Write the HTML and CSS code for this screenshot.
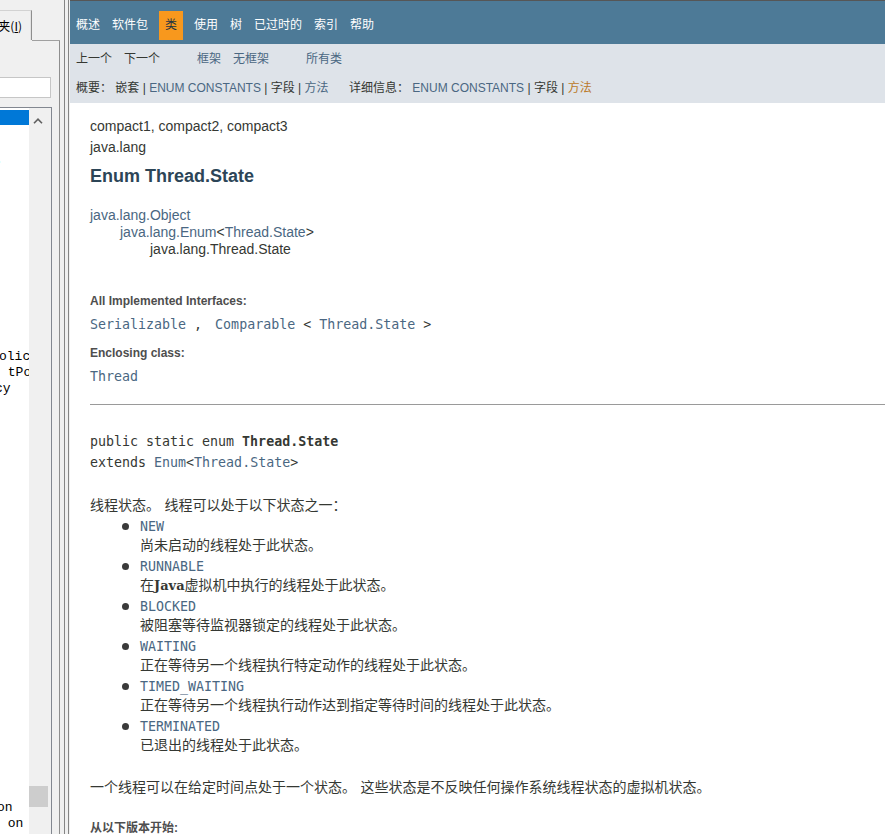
FILE: index.html
```html
<!DOCTYPE html>
<html lang="zh-CN">
<head>
<meta charset="utf-8">
<title>Thread.State</title>
<link rel="stylesheet" href="styles.css">
</head>
<body>
<div class="app">
  <aside class="side">
    <div class="pane">
      <div class="tabrow">
        <div class="tab"><span class="tablabel">收藏夹(<u>I</u>)</span></div>
        <div class="tabfill"></div>
      </div>
      <div class="panel">
        <div class="search"></div>
        <div class="listbox">
          <div class="tree">
            <div class="sel"></div>
            <div class="tl t-dot">.</div>
            <div class="tl t-a">olicy</div>
            <div class="tl t-b"> tPol</div>
            <div class="tl t-c">cy</div>
            <div class="tl t-d">on</div>
            <div class="tl t-e"> on</div>
            <div class="tl t-f">  i</div>
          </div>
          <div class="vscroll">
            <svg class="uparrow" width="10" height="6" viewBox="0 0 10 6"><path d="M1 5.2 L5 1.2 L9 5.2" fill="none" stroke="#606060" stroke-width="1.6"/></svg>
            <div class="thumb"></div>
          </div>
        </div>
      </div>
    </div>
    <div class="split"><span></span><span></span></div>
  </aside>

  <main class="main">
    <div class="topnav">
      <ul class="navlist">
        <li>概述</li>
        <li>软件包</li>
        <li class="cur">类</li>
        <li>使用</li>
        <li>树</li>
        <li>已过时的</li>
        <li>索引</li>
        <li>帮助</li>
      </ul>
    </div>
    <div class="subnav">
      <div class="subrow">
        <ul class="group"><li>上一个</li><li>下一个</li></ul>
        <ul class="group"><li><a>框架</a></li><li><a>无框架</a></li></ul>
        <ul class="group"><li><a>所有类</a></li></ul>
      </div>
      <div class="subrow2">
        <div class="sum">概要：&nbsp;嵌套&nbsp;|&nbsp;<a>ENUM CONSTANTS</a>&nbsp;|&nbsp;字段&nbsp;|&nbsp;<a>方法</a></div>
        <div class="det">详细信息：&nbsp;<a>ENUM CONSTANTS</a>&nbsp;|&nbsp;字段&nbsp;|&nbsp;<a class="visited">方法</a></div>
      </div>
    </div>

    <div class="content">
      <div class="line21">compact1, compact2, compact3</div>
      <div class="line21">java.lang</div>
      <h2 class="title">Enum Thread.State</h2>
      <div class="inherit">
        <div><a>java.lang.Object</a></div>
        <div class="l2"><a>java.lang.Enum</a>&lt;<a>Thread.State</a>&gt;</div>
        <div class="l3">java.lang.Thread.State</div>
      </div>
      <dl class="info">
        <dt>All Implemented Interfaces:</dt>
        <dd><a>Serializable</a> ,<span class="gap"></span> <a>Comparable</a> &lt; <a>Thread.State</a> &gt;</dd>
        <dt class="dt2">Enclosing class:</dt>
        <dd><a>Thread</a></dd>
      </dl>
      <div class="rule"></div>
      <pre class="sig">public static enum <b>Thread.State</b>
extends <a>Enum</a>&lt;<a>Thread.State</a>&gt;</pre>
      <div class="block">
        <p class="para">线程状态。 线程可以处于以下状态之一：</p>
        <ul class="states">
          <li><span class="bullet"></span><div><a class="c">NEW</a><div>尚未启动的线程处于此状态。</div></div></li>
          <li><span class="bullet"></span><div><a class="c">RUNNABLE</a><div>在<span class="lat">Java</span>虚拟机中执行的线程处于此状态。</div></div></li>
          <li><span class="bullet"></span><div><a class="c">BLOCKED</a><div>被阻塞等待监视器锁定的线程处于此状态。</div></div></li>
          <li><span class="bullet"></span><div><a class="c">WAITING</a><div>正在等待另一个线程执行特定动作的线程处于此状态。</div></div></li>
          <li><span class="bullet"></span><div><a class="c">TIMED_WAITING</a><div>正在等待另一个线程执行动作达到指定等待时间的线程处于此状态。</div></div></li>
          <li><span class="bullet"></span><div><a class="c">TERMINATED</a><div>已退出的线程处于此状态。</div></div></li>
        </ul>
        <p class="para2">一个线程可以在给定时间点处于一个状态。 这些状态是不反映任何操作系统线程状态的虚拟机状态。</p>
      </div>
      <div class="since">从以下版本开始:</div>
    </div>
  </main>
</div>
</body>
</html>
```
FILE: styles.css
```css
html, body {
  margin: 0;
  padding: 0;
}
body {
  width: 885px;
  height: 834px;
  overflow: hidden;
  background: #f0f0f0;
}
.app {
  display: flex;
  height: 834px;
}

/* ---------- left help-viewer pane ---------- */
.side {
  width: 70px;
  flex: none;
  display: flex;
  background: #f0f0f0;
  overflow: hidden;
}
.pane {
  width: 60px;
  flex: none;
  display: flex;
  flex-direction: column;
}
.tabrow {
  display: flex;
  height: 41px;
  flex: none;
}
.tab {
  width: 32px;
  height: 30px;
  margin-top: 10px;
  border-top: 1px solid #d2d2d2;
  border-right: 1px solid #8e8e8e;
  box-shadow: inset -1px 0 0 #e3e3e3;
  display: flex;
  align-items: center;
  justify-content: flex-end;
  overflow: hidden;
  padding-right: 9px;
  box-sizing: border-box;
}
.tablabel {
  font-family: "Noto Sans CJK SC", sans-serif;
  font-size: 12px;
  line-height: 16px;
  color: #000;
  white-space: nowrap;
}
.tablabel u {
  text-underline-offset: 1px;
}
.tabfill {
  flex: 1;
  border-bottom: 1px solid #a0a0a0;
}
.panel {
  flex: 1;
  min-height: 0;
  display: flex;
  flex-direction: column;
  border-right: 1px solid #8e8e8e;
}
.search {
  flex: none;
  margin-top: 36px;
  width: 50px;
  height: 19px;
  background: #fff;
  border: 1px solid #c6c6c6;
  border-left: none;
}
.listbox {
  flex: 1;
  min-height: 0;
  margin-top: 9px;
  width: 51px;
  display: flex;
  border-top: 1px solid #828790;
  border-right: 1px solid #828790;
}
.tree {
  width: 29px;
  flex: none;
  background: #fff;
  overflow: hidden;
  display: flex;
  flex-direction: column;
  font-family: "Liberation Mono", monospace;
  font-size: 13px;
  line-height: 16px;
  color: #000;
}
.sel {
  flex: none;
  margin-top: 2px;
  height: 15px;
  background: #0078d7;
}
.tl {
  flex: none;
  white-space: pre;
}
.t-dot { margin-top: 27px; text-indent: -5px; }
.t-a { margin-top: 181px; text-indent: -1px; }
.t-c { text-indent: -5px; }
.t-d { margin-top: 403px; text-indent: -3px; }
.vscroll {
  flex: 1;
  display: flex;
  flex-direction: column;
  background: #f0f0f0;
}
.uparrow {
  display: block;
  margin: 10px 0 0 4px;
}
.thumb {
  margin-top: auto;
  margin-bottom: 27px;
  width: 19px;
  height: 21px;
  background: #cdcdcd;
}
.split {
  width: 10px;
  flex: none;
  display: flex;
}
.split span {
  width: 1px;
  background: #858585;
  margin-left: 4px;
}
.split span + span {
  margin-left: 3px;
}

/* ---------- javadoc page ---------- */
.main {
  flex: 1;
  min-width: 0;
  background: #fff;
  border-top: 1px solid #565656;
  font-family: "Liberation Sans", "Noto Sans CJK SC", sans-serif;
  color: #353833;
  overflow: hidden;
}
a {
  color: #4a6782;
  text-decoration: none;
}
a.visited {
  color: #bb7a2a;
}
.topnav {
  background: #4d7a97;
  height: 43px;
  box-sizing: border-box;
  padding-top: 10px;
}
.navlist {
  list-style: none;
  margin: 0;
  padding: 0;
  display: flex;
  font-size: 12px;
  line-height: 19px;
  color: #fff;
}
.navlist li {
  padding: 5px 6px 5px;
}
.navlist li.cur {
  background: #f8981d;
  color: #253441;
  margin: 0 5px;
}
.subnav {
  background: #dee3e9;
  height: 59px;
  box-sizing: border-box;
  padding-top: 7px;
  font-size: 12px;
  line-height: 16px;
}
.subrow {
  display: flex;
}
.group {
  display: flex;
  list-style: none;
  margin: 0 25px 0 0;
  padding: 0;
}
.group li {
  padding: 0 6px;
}
.subrow2 {
  display: flex;
  margin-top: 13px;
}
.sum {
  width: 267px;
  padding-left: 6px;
  white-space: nowrap;
}
.det {
  padding-left: 6px;
  white-space: nowrap;
}

.content {
  padding: 13px 0 0 20px;
  font-size: 14px;
}
.line21 {
  line-height: 21px;
}
.title {
  margin: 7px 0 0;
  font-size: 18px;
  line-height: 22px;
  font-weight: bold;
  color: #2c4557;
}
.inherit {
  margin-top: 20px;
  line-height: 17px;
}
.inherit .l2 { padding-left: 30px; }
.inherit .l3 { padding-left: 60px; }
.info {
  margin: 35px 0 0;
}
.info dt {
  font-size: 12px;
  line-height: 16px;
  font-weight: bold;
  color: #4e4e4e;
}
.info dt.dt2 {
  margin-top: 10px;
}
.info dd {
  margin: 6px 0 0;
  font-family: "DejaVu Sans Mono", monospace;
  font-size: 13.3px;
  line-height: 20px;
  white-space: pre;
}
.gap {
  display: inline-block;
  width: 5px;
}
.rule {
  margin-top: 17px;
  height: 1px;
  background: #9a9a9a;
}
.sig {
  margin: 26px 0 0;
  font-family: "DejaVu Sans Mono", monospace;
  font-size: 13.3px;
  line-height: 21px;
  color: #353833;
}
.block {
  font-family: "DejaVu Serif", "Noto Sans CJK SC", serif;
  font-size: 14px;
  line-height: 19px;
  color: #353833;
}
.lat {
  font-weight: bold;
  font-size: 13px;
}
.para {
  margin: 23px 0 0;
}
.states {
  list-style: none;
  margin: 2px 0 0;
  padding: 0 0 0 32px;
}
.states li {
  display: flex;
  margin-bottom: 2px;
}
.bullet {
  flex: none;
  width: 7px;
  height: 7px;
  border-radius: 50%;
  background: #3a3a3a;
  margin: 6px 11px 0 0;
}
.c {
  font-family: "DejaVu Sans Mono", monospace;
  font-size: 13.3px;
}
.para2 {
  margin: 23px 0 0;
}
.since {
  margin-top: 23px;
  font-size: 12px;
  line-height: 16px;
  font-weight: bold;
  color: #4e4e4e;
}
```
